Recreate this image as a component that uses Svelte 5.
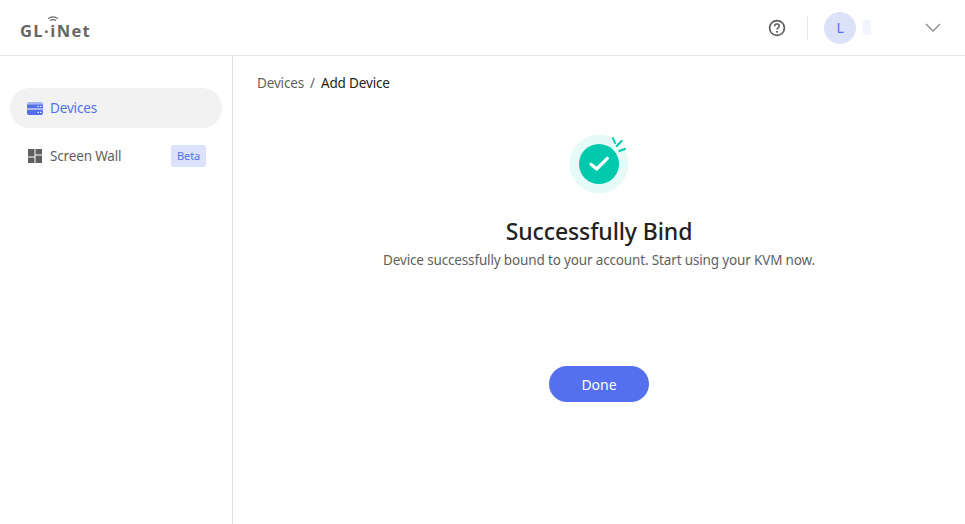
<script>
	let title = 'Successfully Bind';
	let message = 'Device successfully bound to your account. Start using your KVM now.';
</script>

<div class="page">
	<header class="topbar">
		<div class="logo">
			<span>GL·</span><span class="logo-i">i<svg class="wifi" viewBox="0 0 12 8" width="12" height="8">
					<path d="M1 2.6C4 .6 8 .6 11 2.6M2.8 4.6C4.8 3.4 7.2 3.4 9.2 4.6" fill="none" stroke="#666" stroke-width="1.1" />
				</svg></span><span>Net</span>
		</div>
		<div class="actions">
			<svg class="help" viewBox="0 0 18 18" width="18" height="18">
				<circle cx="9" cy="9" r="7.4" fill="none" stroke="#5c5c5c" stroke-width="1.7" />
				<path d="M6.7 7.2C6.7 5.9 7.7 5.1 9 5.1s2.3.8 2.3 2c0 1.7-2.3 1.7-2.3 3.3" fill="none" stroke="#5c5c5c" stroke-width="1.5" />
				<circle cx="9" cy="12.8" r="1" fill="#5c5c5c" />
			</svg>
			<div class="divider"></div>
			<div class="avatar">L</div>
			<div class="name-blur"></div>
			<svg class="chevron" viewBox="0 0 16 9" width="16" height="9">
				<path d="M1 1l7 7 7-7" fill="none" stroke="#8a8a8a" stroke-width="1.3" />
			</svg>
		</div>
	</header>

	<div class="body">
		<nav class="sidebar">
			<div class="nav-item active">
				<svg viewBox="0 0 16 13" width="16" height="13">
					<path d="M2 0h12a2 2 0 0 1 2 2v.4H0V2a2 2 0 0 1 2-2z" fill="#a9b6f5" />
					<rect x="0" y="2.4" width="16" height="4" fill="#5470ee" />
					<rect x="0" y="6.4" width="16" height="1.6" fill="#a9b6f5" />
					<path d="M0 8h16v3a2 2 0 0 1-2 2H2a2 2 0 0 1-2-2z" fill="#5470ee" />
					<path d="M10.5 4.4h1.5M13 4.4h1.5M10.5 10.4h1.5M13 10.4h1.5" stroke="#fff" stroke-width="1" />
				</svg>
				<span>Devices</span>
			</div>
			<div class="nav-item">
				<svg viewBox="0 0 14 14" width="14" height="14">
					<rect x="0" y="0" width="6.5" height="7.5" fill="#5f5f5f" />
					<rect x="7.5" y="0" width="6.5" height="5.5" fill="#5f5f5f" />
					<rect x="0" y="8.5" width="6.5" height="5.5" fill="#5f5f5f" />
					<rect x="7.5" y="6.5" width="6.5" height="7.5" fill="#5f5f5f" />
				</svg>
				<span class="grow">Screen Wall</span>
				<span class="badge">Beta</span>
			</div>
		</nav>

		<main class="content">
			<div class="breadcrumb">
				<span class="crumb">Devices</span>
				<span class="sep">/</span>
				<span class="current">Add Device</span>
			</div>

			<div class="result">
				<svg class="result-icon" viewBox="0 0 60 60" width="60" height="60">
					<circle cx="30" cy="30" r="29.5" fill="#e6fbf7" />
					<circle cx="30" cy="30" r="20" fill="#00c9ad" />
					<path d="M22 30.3l5.7 4.7 10.6-10.7" fill="none" stroke="#fff" stroke-width="3.2" stroke-linecap="round" stroke-linejoin="round" />
					<path d="M44 4l2 5M52.7 7l-5 5M56 15l-5.7 2" fill="none" stroke="#00c9ad" stroke-width="2" stroke-linecap="round" />
				</svg>
				<h1>{title}</h1>
				<p>{message}</p>
				<button type="button" class="done">Done</button>
			</div>
		</main>
	</div>
</div>

<style>
	:global(body) {
		margin: 0;
		background: #ffffff;
	}

	.page {
		height: 524px;
		overflow: hidden;
		font-family: 'Noto Sans', 'Open Sans', sans-serif;
		font-size: 13.5px;
		letter-spacing: -0.15px;
		color: #5f5f5f;
		display: flex;
		flex-direction: column;
	}

	.topbar {
		height: 55px;
		flex: none;
		border-bottom: 1px solid #e6e6e6;
		display: flex;
		align-items: center;
		justify-content: space-between;
		padding: 0 24px 0 20px;
	}

	.logo {
		font-family: 'Open Sans', sans-serif;
		font-size: 16.5px;
		font-weight: 700;
		letter-spacing: 1.4px;
		color: #666666;
		display: flex;
		padding-top: 6px;
	}

	.logo-i {
		position: relative;
	}

	.wifi {
		position: absolute;
		left: -3px;
		top: -3px;
	}

	.actions {
		display: flex;
		align-items: center;
	}

	.divider {
		width: 1px;
		height: 24px;
		background: #e6e6e6;
		margin: 0 16px 0 21px;
	}

	.avatar {
		width: 32px;
		height: 32px;
		border-radius: 50%;
		background: #dde2fb;
		color: #5470ee;
		font-size: 14px;
		display: flex;
		align-items: center;
		justify-content: center;
	}

	.name-blur {
		width: 8px;
		height: 15px;
		background: #f2f4fe;
		margin: 0 54px 0 7px;
	}

	.body {
		flex: 1;
		display: flex;
	}

	.sidebar {
		width: 212px;
		flex: none;
		border-right: 1px solid #e0e0e0;
		padding: 32px 10px 0;
	}

	.nav-item {
		height: 40px;
		border-radius: 20px;
		display: flex;
		align-items: center;
		padding: 0 16px 0 17px;
		gap: 7px;
		margin-bottom: 8px;
	}

	.nav-item svg {
		flex: none;
	}

	.nav-item.active {
		background: #f2f2f2;
		color: #5470ee;
	}

	.nav-item:not(.active) svg {
		margin: 0 1px;
	}

	.grow {
		flex: 1;
	}

	.badge {
		background: #dde2fb;
		color: #5470ee;
		font-size: 11px;
		padding: 0 6px;
		height: 22px;
		line-height: 22px;
		border-radius: 2px;
	}

	.content {
		flex: 1;
		padding: 17px 24px 0;
	}

	.breadcrumb {
		line-height: 20px;
		display: flex;
		gap: 6px;
	}

	.current {
		color: #222222;
	}

	.result {
		display: flex;
		flex-direction: column;
		align-items: center;
		margin-top: 41px;
	}

	.result-icon {
		display: block;
	}

	h1 {
		margin: 21px 0 0;
		font-size: 23px;
		line-height: 32px;
		font-weight: 500;
		letter-spacing: -0.1px;
		color: #222222;
	}

	p {
		margin: 3px 0 0;
		line-height: 20px;
	}

	.done {
		margin-top: 96px;
		width: 100px;
		height: 36px;
		border: none;
		border-radius: 18px;
		background: #5470ee;
		color: #ffffff;
		font-family: inherit;
		font-size: 14px;
		cursor: pointer;
	}
</style>
